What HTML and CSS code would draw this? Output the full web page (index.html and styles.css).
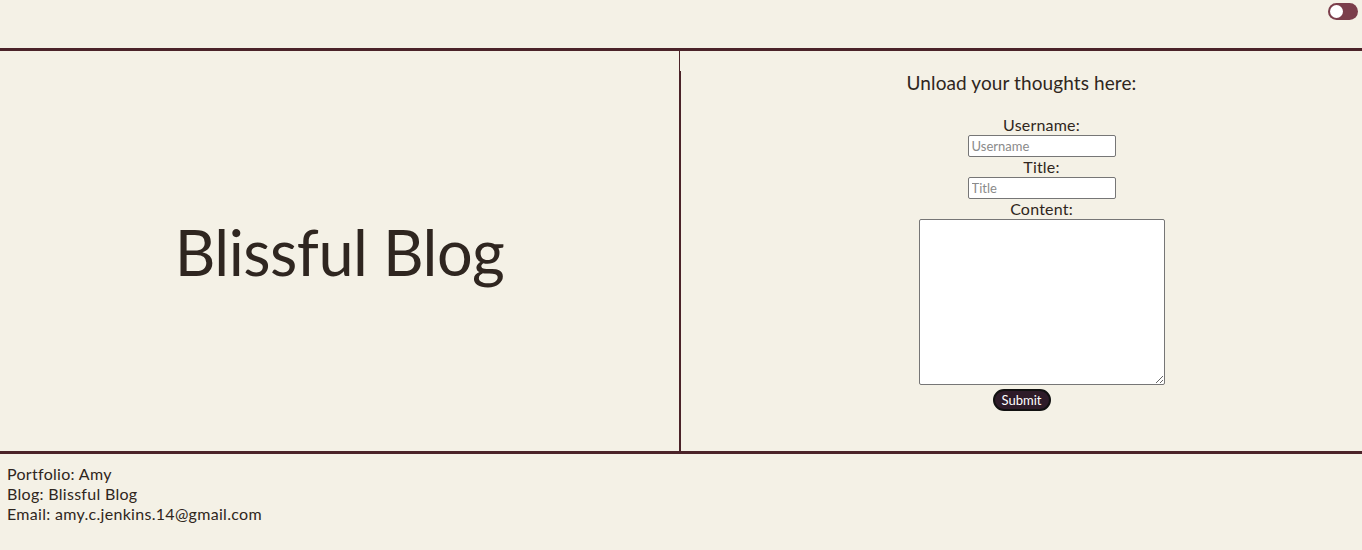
FILE: index.html
```html
<!DOCTYPE html>
<html lang="en">
<head>
<meta charset="utf-8">
<title>Blissful Blog</title>
<link rel="stylesheet" href="styles.css">
</head>
<body>
<header class="top">
  <label class="toggle"><span class="knob"></span></label>
</header>
<main class="main">
  <section class="brand">
    <h1 class="brand-title">Blissful Blog</h1>
  </section>
  <section class="compose">
    <div class="compose-inner">
      <h2 class="compose-title">Unload your thoughts here:</h2>
      <form class="form">
        <div class="fields">
          <label class="lbl" for="u">Username:</label>
          <input class="field" id="u" type="text" placeholder="Username">
          <label class="lbl" for="t">Title:</label>
          <input class="field" id="t" type="text" placeholder="Title">
          <label class="lbl" for="c">Content:</label>
          <textarea class="area" id="c"></textarea>
        </div>
        <button class="submit" type="button">Submit</button>
      </form>
    </div>
  </section>
</main>
<footer class="foot">
  <p class="foot-line">Portfolio: Amy</p>
  <p class="foot-line">Blog: Blissful Blog</p>
  <p class="foot-line">Email: amy.c.jenkins.14@gmail.com</p>
</footer>
</body>
</html>
```
FILE: styles.css
```css
html, body {
  margin: 0;
  padding: 0;
  background: #f4f1e6;
  color: #2f2620;
  font-family: Lato, "Noto Sans", sans-serif;
}
.top {
  height: 48px;
  display: flex;
  justify-content: flex-end;
  align-items: flex-start;
  padding: 3px 4px 0 0;
  box-sizing: border-box;
}
.toggle {
  width: 30px;
  height: 17px;
  border-radius: 9px;
  background: #7b3e4b;
  display: flex;
  align-items: center;
  padding-left: 2px;
  box-sizing: border-box;
}
.knob {
  width: 13px;
  height: 13px;
  border-radius: 50%;
  background: #ffffff;
}
.main {
  display: grid;
  grid-template-columns: 680px 1fr;
  height: 406px;
  border-top: 3px solid #4b2329;
  border-bottom: 3px solid #4b2329;
  box-sizing: border-box;
}
.brand {
  border-right: 1px solid #4b2329;
  display: flex;
  align-items: center;
  justify-content: center;
}
.brand-title {
  margin: 0;
  font-weight: 400;
  font-size: 63px;
  letter-spacing: -0.5px;
  color: #2f2620;
}
.compose {
  display: flex;
}
.compose-inner {
  margin-top: 20px;
  flex: 1;
  border-left: 1px solid #4b2329;
  display: flex;
  flex-direction: column;
  align-items: center;
}
.compose-title {
  margin: 0 0 21px;
  font-size: 19px;
  line-height: 23px;
  font-weight: 400;
  letter-spacing: 0.1px;
}
.form {
  display: flex;
  flex-direction: column;
  align-items: center;
}
.fields {
  display: flex;
  flex-direction: column;
  align-items: center;
  padding-left: 40px;
}
.lbl {
  font-size: 16px;
  line-height: 20px;
  letter-spacing: 0.2px;
}
.field {
  width: 148px;
  height: 22px;
  box-sizing: border-box;
  border: 1px solid #767676;
  border-radius: 2px;
  background: #fff;
  font-family: Lato, "Noto Sans", sans-serif;
  font-size: 13px;
  padding: 0 3px;
  margin: 0;
}
.field::placeholder {
  color: #8a8a8a;
}
.area {
  width: 246px;
  height: 166px;
  box-sizing: border-box;
  border: 1px solid #767676;
  border-radius: 2px;
  background: #fff;
  margin: 0;
}
.submit {
  margin-top: 4px;
  width: 58px;
  height: 22px;
  box-sizing: border-box;
  border: 2px solid #111;
  border-radius: 11px;
  background: #2e1c29;
  color: #fff;
  font-family: Lato, "Noto Sans", sans-serif;
  font-size: 13px;
  padding: 0;
}
.foot {
  padding: 10px 7px;
}
.foot-line {
  margin: 0;
  font-size: 16px;
  line-height: 20px;
  letter-spacing: 0.3px;
}
```
